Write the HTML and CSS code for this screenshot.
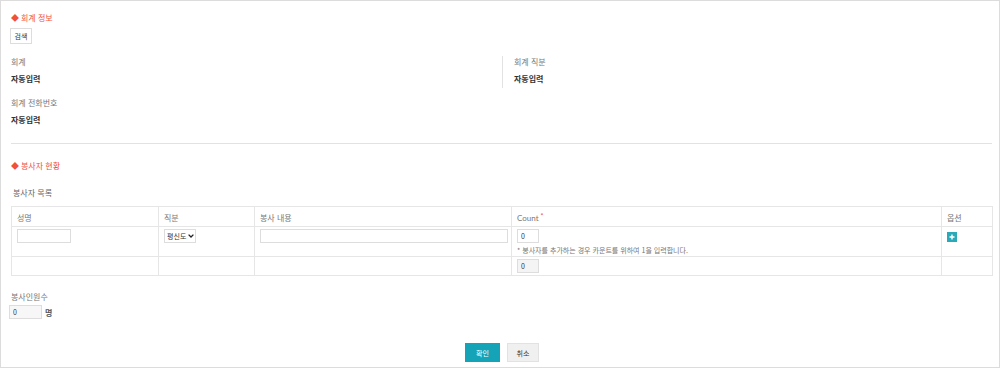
FILE: index.html
```html
<!DOCTYPE html>
<html lang="ko">
<head>
    <meta charset="UTF-8">
    <title>회계 정보</title>
    <link rel="stylesheet" href="styles.css">
</head>
<body>
    <div class="page">
        <div class="sec-title">회계 정보</div>
        <button type="button" class="btn-search">검색</button>

        <div class="info-grid">
            <div class="info-col">
                <div class="info-label">회계</div>
                <div class="info-value">자동입력</div>
            </div>
            <div class="info-col info-col-right">
                <div class="info-label">회계 직분</div>
                <div class="info-value">자동입력</div>
            </div>
            <div class="info-col">
                <div class="info-label">회계 전화번호</div>
                <div class="info-value">자동입력</div>
            </div>
        </div>

        <hr class="divider">

        <div class="sec-title">봉사자 현황</div>
        <div class="list-label">봉사자 목록</div>

        <table class="vol-table">
            <colgroup>
                <col class="c-name">
                <col class="c-role">
                <col class="c-desc">
                <col class="c-count">
                <col class="c-opt">
            </colgroup>
            <thead>
                <tr>
                    <th>성명</th>
                    <th>직분</th>
                    <th>봉사 내용</th>
                    <th class="th-count">Count <span class="req">*</span></th>
                    <th>옵션</th>
                </tr>
            </thead>
            <tbody>
                <tr class="row-main">
                    <td><input type="text" class="in-name"></td>
                    <td>
                        <span class="sel-wrap">
                            <select class="sel-role">
                                <option>평신도</option>
                            </select>
                            <svg class="sel-arrow" width="6" height="4" viewBox="0 0 6 4"><path d="M0.6 0.6L3 3L5.4 0.6" fill="none" stroke="#222" stroke-width="1.3"/></svg>
                        </span>
                    </td>
                    <td><input type="text" class="in-desc"></td>
                    <td>
                        <input type="text" class="in-count" value="0">
                        <div class="note">* 봉사자를 추가하는 경우 카운트를 위하여 1을 입력합니다.</div>
                    </td>
                    <td><button type="button" class="btn-plus" aria-label="추가">
                        <svg width="6" height="6" viewBox="0 0 6 6"><path d="M3 0.5v5M0.5 3h5" stroke="#fff" stroke-width="1.4"/></svg>
                    </button></td>
                </tr>
                <tr class="row-total">
                    <td></td>
                    <td></td>
                    <td></td>
                    <td><input type="text" class="in-count in-readonly" value="0" readonly></td>
                    <td></td>
                </tr>
            </tbody>
        </table>

        <div class="total-label">봉사인원수</div>
        <div class="total-row">
            <input type="text" class="in-total" value="0" readonly>
            <span class="unit">명</span>
        </div>

        <div class="actions">
            <button type="button" class="btn-ok">확인</button>
            <button type="button" class="btn-cancel">취소</button>
        </div>
    </div>
</body>
</html>
```

FILE: styles.css
```css
* {
    box-sizing: border-box;
}
body {
    margin: 0;
    font-family: "Noto Sans CJK KR", "Noto Sans", sans-serif;
    font-size: 8px;
    color: #333;
    background: #fff;
}
.page {
    width: 1000px;
    height: 368px;
    border: 1px solid #dcdcdc;
    padding: 11px 9px 0 9px;
}
.sec-title {
    color: #f0503c;
    font-size: 8px;
    line-height: 12px;
    padding-left: 1px;
}
.sec-title::before {
    content: "◆";
    margin-right: 2px;
}
.btn-search {
    display: block;
    margin-top: 4px;
    width: 22px;
    height: 16px;
    padding: 0;
    border: 1px solid #ddd;
    background: #fff;
    font-family: inherit;
    font-size: 7px;
    color: #333;
    line-height: 14px;
}
.info-grid {
    display: grid;
    grid-template-columns: 492px 1fr;
    margin-top: 12px;
    row-gap: 9px;
}
.info-col {
    padding: 0 1px;
    height: 32px;
}
.info-col-right {
    border-left: 1px solid #e2e2e2;
    padding-left: 11px;
}
.info-label {
    color: #777;
    line-height: 12px;
}
.info-value {
    font-weight: 700;
    color: #333;
    line-height: 12px;
    margin-top: 5px;
}
.divider {
    border: 0;
    border-top: 1px solid #e2e2e2;
    margin: 14px 0 0 1px;
    width: 981px;
}
.divider + .sec-title {
    margin-top: 16px;
}
.list-label {
    color: #666;
    line-height: 12px;
    margin-top: 15px;
    padding-left: 3px;
}
.vol-table {
    border-collapse: collapse;
    table-layout: fixed;
    margin: 7px 0 0 1px;
    width: 981px;
    border: 1px solid #e2e2e2;
}
.c-name { width: 147px; }
.c-role { width: 96px; }
.c-desc { width: 257px; }
.c-count { width: 430px; }
.c-opt { width: 51px; }
.vol-table th,
.vol-table td {
    border: 1px solid #e6e6e6;
    text-align: left;
    vertical-align: top;
    padding: 2px 5px 0 5px;
}
.vol-table th {
    font-weight: 400;
    color: #777;
    height: 20px;
    line-height: 12px;
    padding-top: 5px;
}
.th-count {
    font-family: "Lato", "Noto Sans CJK KR", sans-serif;
}
.req {
    color: #f0503c;
    vertical-align: top;
    font-size: 7px;
    line-height: 8px;
}
.row-main td {
    height: 30px;
}
.row-total td {
    height: 19px;
}
.vol-table input,
.vol-table select {
    font-family: inherit;
    font-size: 7px;
    height: 14px;
    border: 1px solid #ddd;
    background: #fff;
    color: #333;
    padding: 0 3px;
    display: block;
}
.in-name { width: 54px; }
.in-desc { width: 248px; }
.in-count { width: 22px; }
.in-readonly {
    background: #f4f4f4 !important;
}
.sel-wrap {
    position: relative;
    display: block;
    width: 32px;
}
.vol-table .sel-role {
    width: 32px;
    padding: 0 0 0 2px;
    appearance: none;
    -webkit-appearance: none;
}
.sel-arrow {
    position: absolute;
    right: 2px;
    top: 5px;
}
.note {
    color: #777;
    font-size: 7px;
    line-height: 10px;
    margin-top: 2px;
}
.btn-plus {
    display: flex;
    align-items: center;
    justify-content: center;
    width: 10px;
    height: 10px;
    margin-top: 3px;
    padding: 0;
    border: 0;
    background: #2aa9b9;
}
.total-label {
    color: #777;
    line-height: 12px;
    margin-top: 15px;
    padding-left: 1px;
}
.total-row {
    display: flex;
    align-items: center;
    gap: 3px;
    margin-top: 2px;
    margin-left: -1px;
}
.in-total {
    width: 33px;
    height: 14px;
    border: 1px solid #ddd;
    background: #f7f7f7;
    font-family: inherit;
    font-size: 7px;
    padding: 0 3px;
    color: #333;
}
.unit {
    font-weight: 700;
    color: #555;
}
.actions {
    display: flex;
    justify-content: center;
    gap: 7px;
    margin-top: 24px;
    padding-left: 4px;
}
.btn-ok,
.btn-cancel {
    height: 19px;
    font-family: inherit;
    font-size: 7px;
    border: 0;
    padding: 0;
}
.btn-ok {
    width: 35px;
    background: #15a3b8;
    color: #fff;
}
.btn-cancel {
    width: 32px;
    background: #f0f0f0;
    border: 1px solid #e2e2e2;
    color: #333;
}
```
